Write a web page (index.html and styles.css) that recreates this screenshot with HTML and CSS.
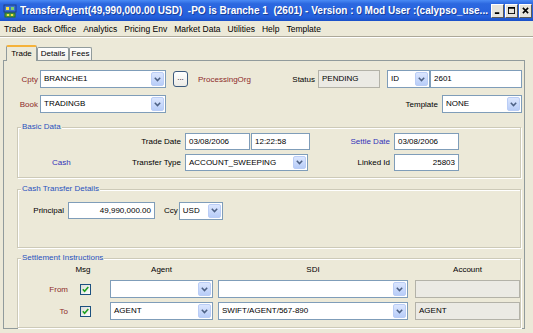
FILE: index.html
```html
<!DOCTYPE html>
<html lang="en">
<head>
    <meta charset="UTF-8">
    <title>TransferAgent</title>
    <link rel="stylesheet" href="styles.css">
</head>
<body>
    <div class="titlebar">
        <svg class="app-icon" viewBox="0 0 14 14">
            <rect x="1" y="1" width="12" height="7" fill="#3a6fd0" stroke="#1c3e8a" stroke-width="1"/>
            <rect x="3" y="3" width="3" height="3" fill="#f4e04a"/>
            <rect x="8" y="3" width="3" height="3" fill="#7fd16a"/>
            <rect x="2" y="9" width="10" height="4" fill="#5aa845" stroke="#2e6b22" stroke-width="1"/>
            <rect x="4" y="10" width="2" height="2" fill="#f4e04a"/>
            <rect x="8" y="10" width="2" height="2" fill="#f4e04a"/>
        </svg>
        <span class="title-text">TransferAgent(49,990,000.00 USD) &nbsp;-PO is Branche 1 &nbsp;(2601) - Version : 0 Mod User :(calypso_use...</span>
        <div class="win-buttons">
            <span class="wbtn"><svg viewBox="0 0 8 8"><rect x="1" y="6" width="5" height="2" fill="#000"/></svg></span>
            <span class="wbtn"><svg viewBox="0 0 8 8"><rect x="0.5" y="0.5" width="7" height="7" fill="none" stroke="#000"/><rect x="0" y="0" width="8" height="2" fill="#000"/></svg></span>
            <span class="wbtn"><svg viewBox="0 0 8 8"><path d="M1 1 L7 7 M7 1 L1 7" stroke="#000" stroke-width="1.8"/></svg></span>
        </div>
    </div>

    <div class="menubar">
        <span>Trade</span>
        <span>Back Office</span>
        <span>Analytics</span>
        <span>Pricing Env</span>
        <span>Market Data</span>
        <span>Utilities</span>
        <span>Help</span>
        <span>Template</span>
    </div>

    <div class="tabs">
        <span class="tab tab-trade active">Trade</span>
        <span class="tab tab-details">Details</span>
        <span class="tab tab-fees">Fees</span>
    </div>

    <div class="panel">
        <!-- counterparty row -->
        <div class="row">
            <span class="lead-label red">Cpty</span>
            <div class="combo cpty-combo">
                <span class="combo-text">BRANCHE1</span>
                <span class="combo-btn"><svg viewBox="0 0 7 5"><path d="M0.8 0.8 L3.5 3.6 L6.2 0.8" fill="none" stroke="#4d6185" stroke-width="1.5"/></svg></span>
            </div>
            <span class="dots-btn">...</span>
            <span class="red po-label">ProcessingOrg</span>
            <span class="push status-label">Status</span>
            <span class="field ro status-field">PENDING</span>
            <div class="combo id-combo">
                <span class="combo-text">ID</span>
                <span class="combo-btn"><svg viewBox="0 0 7 5"><path d="M0.8 0.8 L3.5 3.6 L6.2 0.8" fill="none" stroke="#4d6185" stroke-width="1.5"/></svg></span>
            </div>
            <span class="field id-field">2601</span>
        </div>

        <div class="row row-book">
            <span class="lead-label red">Book</span>
            <div class="combo cpty-combo">
                <span class="combo-text">TRADINGB</span>
                <span class="combo-btn"><svg viewBox="0 0 7 5"><path d="M0.8 0.8 L3.5 3.6 L6.2 0.8" fill="none" stroke="#4d6185" stroke-width="1.5"/></svg></span>
            </div>
            <span class="push template-label">Template</span>
            <div class="combo template-combo">
                <span class="combo-text">NONE</span>
                <span class="combo-btn"><svg viewBox="0 0 7 5"><path d="M0.8 0.8 L3.5 3.6 L6.2 0.8" fill="none" stroke="#4d6185" stroke-width="1.5"/></svg></span>
            </div>
        </div>

        <!-- Basic Data -->
        <div class="group basic-group">
            <span class="group-title">Basic Data</span>
            <div class="grow">
                <span class="basic-lead">Trade Date</span>
                <span class="field date-field">03/08/2006</span>
                <span class="field time-field">12:22:58</span>
                <span class="basic-mid blue">Settle Date</span>
                <span class="field date-field">03/08/2006</span>
            </div>
            <div class="grow">
                <span class="basic-lead split"><span class="blue cash-label">Cash</span><span>Transfer Type</span></span>
                <div class="combo type-combo">
                    <span class="combo-text">ACCOUNT_SWEEPING</span>
                    <span class="combo-btn"><svg viewBox="0 0 7 5"><path d="M0.8 0.8 L3.5 3.6 L6.2 0.8" fill="none" stroke="#4d6185" stroke-width="1.5"/></svg></span>
                </div>
                <span class="basic-mid linked">Linked Id</span>
                <span class="field date-field num">25803</span>
            </div>
        </div>

        <!-- Cash Transfer Details -->
        <div class="group cash-group">
            <span class="group-title">Cash Transfer Details</span>
            <div class="grow">
                <span class="principal-label">Principal</span>
                <span class="field principal-field num">49,990,000.00</span>
                <span class="ccy-label">Ccy</span>
                <div class="combo ccy-combo">
                    <span class="combo-text">USD</span>
                    <span class="combo-btn"><svg viewBox="0 0 7 5"><path d="M0.8 0.8 L3.5 3.6 L6.2 0.8" fill="none" stroke="#4d6185" stroke-width="1.5"/></svg></span>
                </div>
            </div>
        </div>

        <!-- Settlement Instructions -->
        <div class="group settle-group">
            <span class="group-title">Settlement Instructions</span>
            <div class="settle-grid">
                <span></span>
                <span class="head msg-head">Msg</span>
                <span class="head agent-col">Agent</span>
                <span class="head sdi-col">SDI</span>
                <span class="head account-col">Account</span>

                <span class="settle-label red">From</span>
                <span class="check"><svg viewBox="0 0 9 9"><path d="M1.8 4.3 L3.6 6.3 L7.3 2" fill="none" stroke="#21a121" stroke-width="1.6"/></svg></span>
                <div class="combo agent-col">
                    <span class="combo-text"></span>
                    <span class="combo-btn"><svg viewBox="0 0 7 5"><path d="M0.8 0.8 L3.5 3.6 L6.2 0.8" fill="none" stroke="#4d6185" stroke-width="1.5"/></svg></span>
                </div>
                <div class="combo sdi-col">
                    <span class="combo-text"></span>
                    <span class="combo-btn"><svg viewBox="0 0 7 5"><path d="M0.8 0.8 L3.5 3.6 L6.2 0.8" fill="none" stroke="#4d6185" stroke-width="1.5"/></svg></span>
                </div>
                <span class="field ro account-col"></span>

                <span class="settle-label red">To</span>
                <span class="check"><svg viewBox="0 0 9 9"><path d="M1.8 4.3 L3.6 6.3 L7.3 2" fill="none" stroke="#21a121" stroke-width="1.6"/></svg></span>
                <div class="combo agent-col">
                    <span class="combo-text">AGENT</span>
                    <span class="combo-btn"><svg viewBox="0 0 7 5"><path d="M0.8 0.8 L3.5 3.6 L6.2 0.8" fill="none" stroke="#4d6185" stroke-width="1.5"/></svg></span>
                </div>
                <div class="combo sdi-col">
                    <span class="combo-text">SWIFT/AGENT/567-890</span>
                    <span class="combo-btn"><svg viewBox="0 0 7 5"><path d="M0.8 0.8 L3.5 3.6 L6.2 0.8" fill="none" stroke="#4d6185" stroke-width="1.5"/></svg></span>
                </div>
                <span class="field ro account-col">AGENT</span>
            </div>
        </div>
    </div>
</body>
</html>
```

FILE: styles.css
```css
* {
    box-sizing: border-box;
}
body {
    margin: 0;
    width: 533px;
    height: 333px;
    overflow: hidden;
    background: #ece9d8;
    font-family: "Liberation Sans", Tahoma, Arial, sans-serif;
    font-size: 8px;
    color: #000;
}

/* window title */
.titlebar {
    height: 21px;
    display: flex;
    align-items: center;
    padding-left: 3px;
    background: linear-gradient(to bottom, #4a8af4 0%, #2c68e0 18%, #2560dc 80%, #1a50c8 100%);
    color: #fff;
}
.app-icon {
    width: 14px;
    height: 14px;
    margin-right: 3px;
    flex-shrink: 0;
}
.title-text {
    flex: 1;
    font-size: 10px;
    font-weight: bold;
    white-space: nowrap;
    overflow: hidden;
    text-shadow: 1px 1px 0 #1a3f9a;
}
.win-buttons {
    display: flex;
    gap: 1px;
    margin-right: 1px;
}
.wbtn {
    width: 13px;
    height: 14px;
    display: flex;
    align-items: center;
    justify-content: center;
    background: #e6e4dc;
    border: 1px solid;
    border-color: #fff #5a5a5a #5a5a5a #fff;
}
.wbtn svg {
    width: 7px;
    height: 7px;
}

/* menu */
.menubar {
    height: 16px;
    display: flex;
    align-items: center;
    gap: 7px;
    padding-left: 4px;
    font-size: 8.5px;
    border-bottom: 1px solid #aca899;
    box-shadow: 0 1px 0 #fff;
}

/* tabs */
.tabs {
    height: 23px;
    display: flex;
    align-items: flex-end;
    padding-left: 6px;
}
.tab {
    height: 13px;
    line-height: 12px;
    text-align: center;
    background: linear-gradient(to bottom, #fefefe, #f1f0ea);
    border: 1px solid #919b9c;
    border-bottom: none;
    border-radius: 2px 2px 0 0;
}
.tab.active {
    height: 16px;
    line-height: 14px;
    margin-bottom: -1px;
    position: relative;
    z-index: 1;
    background: #ece9d8;
    border-top: 2px solid #f5b23a;
}
.tab-trade { width: 31px; }
.tab-details { width: 32px; }
.tab-fees { width: 23px; }

/* main panel */
.panel {
    width: 522px;
    height: 269px;
    margin-left: 3px;
    padding: 9px 2px 0 0;
    border: 1px solid #919b9c;
}
.row {
    height: 18px;
    display: flex;
    align-items: center;
}
.row-book {
    margin-top: 7px;
}
.red {
    color: #8c2a2a;
}
.blue {
    color: #3434b8;
}
.push {
    margin-left: auto;
}
.lead-label {
    width: 36px;
    padding-right: 2px;
    text-align: right;
}

/* inputs */
.field {
    height: 17px;
    line-height: 15px;
    padding: 0 3px;
    background: #fff;
    border: 1px solid #7f9db9;
    white-space: nowrap;
    overflow: hidden;
}
.field.ro {
    background: #ebeae4;
    border-color: #b3b2a8;
}
.field.num {
    text-align: right;
}
.combo {
    height: 18px;
    display: flex;
    background: #fff;
    border: 1px solid #7f9db9;
}
.combo-text {
    flex: 1;
    padding-left: 3px;
    line-height: 16px;
    white-space: nowrap;
    overflow: hidden;
}
.combo-btn {
    width: 13px;
    margin: 1px;
    display: flex;
    align-items: center;
    justify-content: center;
    background: linear-gradient(to bottom, #dbe6fe, #b8cdf8);
    border: 1px solid #bacdf6;
    border-radius: 2px;
}
.combo-btn svg {
    width: 7px;
    height: 5px;
}
.dots-btn {
    width: 15px;
    height: 16px;
    margin-left: 7px;
    line-height: 11px;
    text-align: center;
    background: linear-gradient(to bottom, #fff, #ecebe6);
    border: 1px solid #3c5a7e;
    border-radius: 3px;
}
.check {
    width: 11px;
    height: 11px;
    margin-left: 8px;
    display: flex;
    border: 1px solid #1c5180;
    background: linear-gradient(135deg, #dcdcd6, #fff);
}
.check svg {
    width: 9px;
    height: 9px;
}

/* top rows */
.cpty-combo { width: 126px; }
.po-label { margin-left: 10px; }
.status-label { margin-right: 3px; }
.status-field { width: 62px; height: 18px; line-height: 16px; }
.id-combo { width: 43px; margin-left: 7px; }
.id-field { width: 92px; height: 18px; line-height: 16px; }
.template-label { margin-right: 4px; }
.template-combo { width: 80px; }

/* groups */
.group {
    position: relative;
    margin-left: 13px;
    margin-right: 1px;
    border: 1px solid #cdcab8;
    box-shadow: inset 1px 1px 0 #fff, 1px 1px 0 #fff;
}
.group-title {
    position: absolute;
    top: -6px;
    left: 3px;
    padding: 0 1px;
    line-height: 10px;
    color: #2a52be;
    background: #ece9d8;
}
.grow {
    height: 17px;
    display: flex;
    align-items: center;
}
.basic-group {
    height: 51px;
    margin-top: 14px;
    padding-top: 5px;
}
.basic-group .grow + .grow {
    margin-top: 4px;
}
.basic-lead {
    width: 163px;
    margin-right: 4px;
    text-align: right;
}
.basic-lead.split {
    display: flex;
    justify-content: space-between;
}
.cash-label {
    padding-left: 34px;
}
.date-field { width: 65px; }
.time-field { width: 59px; margin-left: 1px; }
.basic-mid {
    width: 80px;
    margin-right: 4px;
    text-align: right;
}
.basic-mid.linked { width: 82px; }
.type-combo { width: 123px; height: 17px; }
.type-combo .combo-text { line-height: 15px; }

.cash-group {
    height: 59px;
    margin-top: 11px;
    padding-top: 12px;
}
.principal-label {
    width: 50px;
    padding-right: 4px;
    text-align: right;
}
.principal-field { width: 87px; }
.ccy-label { margin-left: 9px; margin-right: 1px; }
.ccy-combo { width: 44px; }

.settle-group {
    height: 70px;
    margin-top: 10px;
    padding-top: 5px;
}
.settle-grid {
    display: grid;
    grid-template-columns: 54px 38px 108px 197px 105px;
    grid-template-rows: 12px 18px 18px;
    row-gap: 4px;
    align-items: center;
}
.settle-grid .head {
    text-align: center;
    line-height: 12px;
}
.msg-head {
    width: 22px;
}
.settle-label {
    padding-right: 4px;
    text-align: right;
}
.agent-col { width: 103px; }
.sdi-col { width: 190px; }
.account-col { width: 105px; }
.settle-grid .field {
    height: 18px;
    line-height: 16px;
}
```
